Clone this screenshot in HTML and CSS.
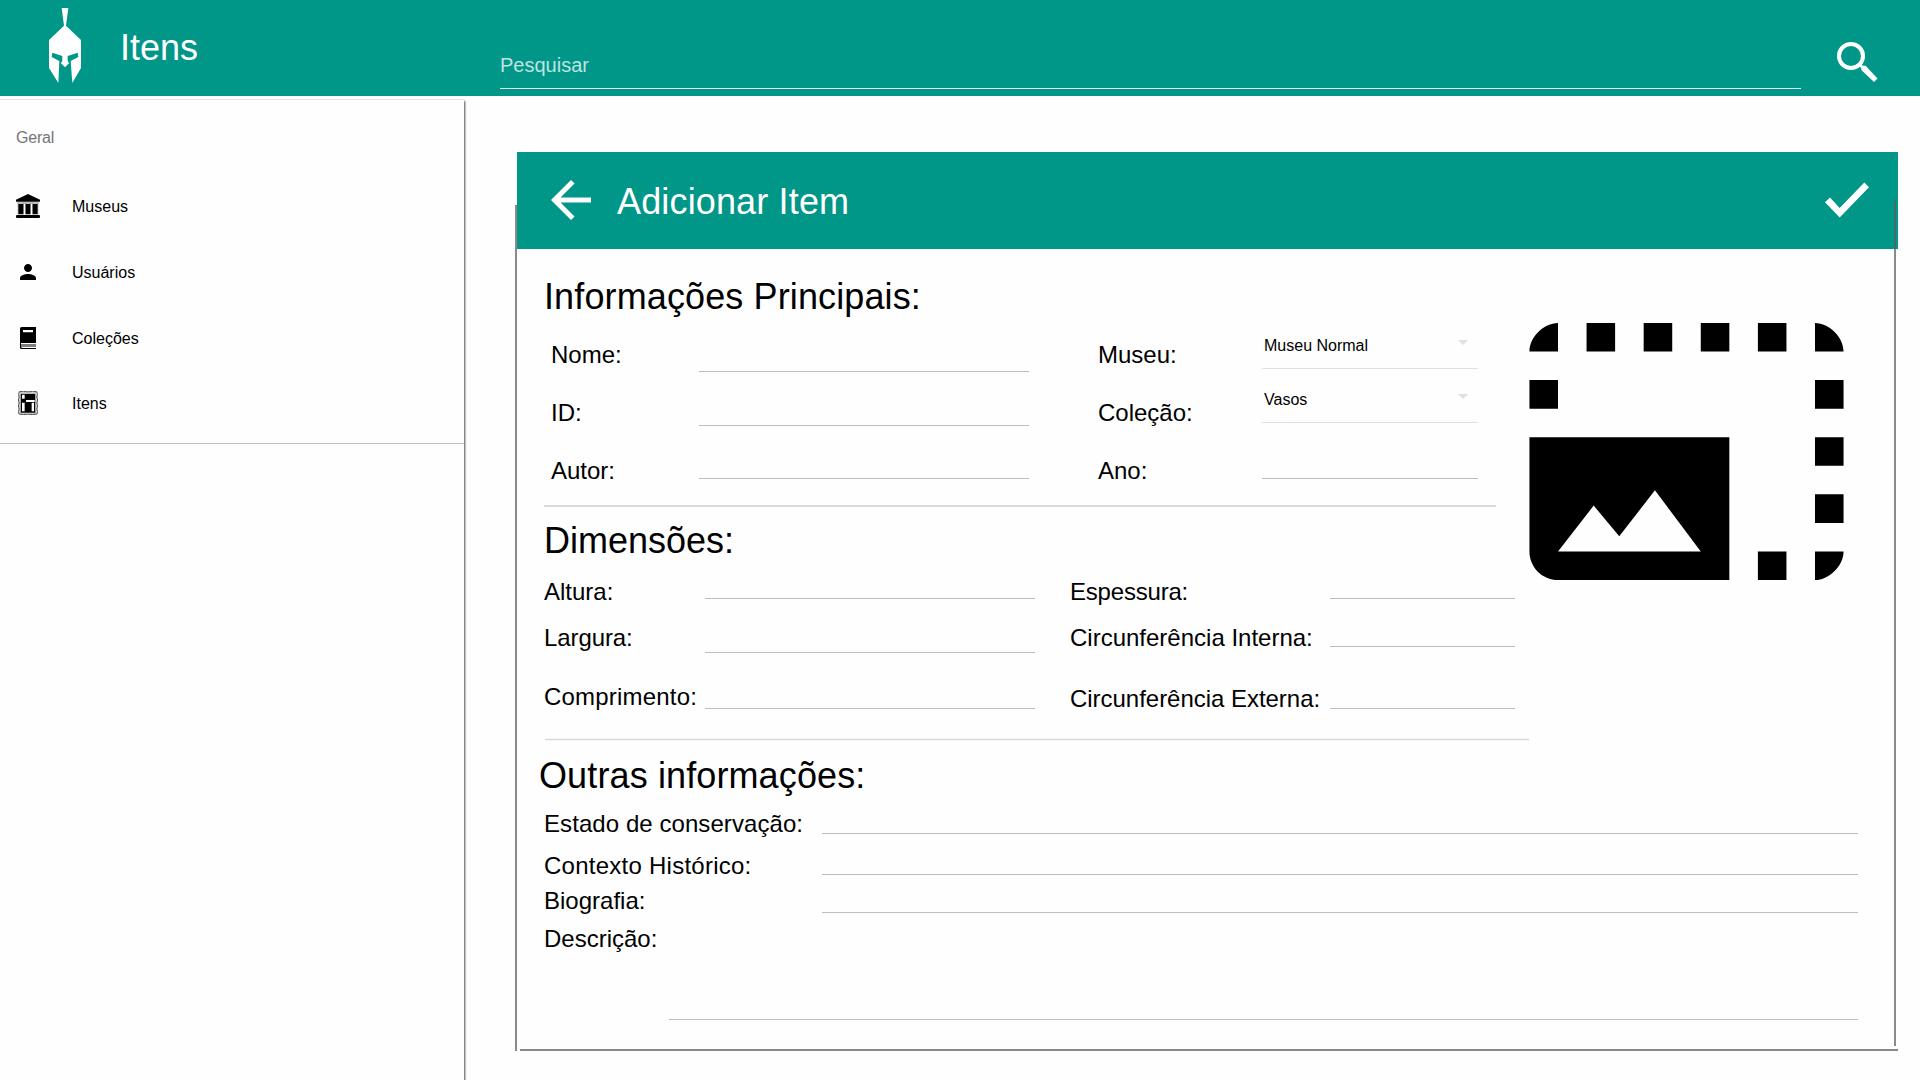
FILE: index.html
```html
<!DOCTYPE html>
<html lang="pt-BR">
<head>
<meta charset="utf-8">
<title>Itens</title>
<link rel="stylesheet" href="styles.css">
</head>
<body>
<header class="topbar">
  <svg class="logo" viewBox="57 24 96 225"><path d="M95 24h20L108 77 153 120V204L127 249 122 183 145 171 143 158 113 168V182L117 190 105 202 93 190 97 182V168L67 158 65 171 88 183 85 249 57 204V120L102 77Z"/></svg>
  <h1 class="topbar-title">Itens</h1>
  <div class="search">Pesquisar</div>
  <svg class="search-icon" viewBox="0 0 41 41"><circle cx="14" cy="14" r="12" fill="none" stroke="#fff" stroke-width="4"/><path d="M24.300 28V26L22 24 24 22 26 23.700H28.700L40.500 36.500 37 40Z"/></svg>
</header>
<div class="layout">
  <nav class="sidebar">
    <div class="sidebar-title">Geral</div>
    <a class="nav-item"><svg class="nav-icon" viewBox="0 0 72 72"><path d="M36 0 72 17V23H0V17Z"/><path d="M4 26H68V28H4ZM7 30H22V61H7ZM29 30H43V61H29ZM50 30H65V61H50Z"/><path d="M5 28h2v33h-2zM22 28h2v33h-2zM27 28h2v33h-2zM43 28h2v33h-2zM48 28h2v33h-2zM65 28h2v33h-2z" opacity=".4"/><rect y="63" width="72" height="9" rx="3"/></svg><span>Museus</span></a>
    <a class="nav-item"><svg class="nav-icon" viewBox="0 0 24 24"><path d="M12 12c2.210 0 4-1.790 4-4s-1.790-4-4-4-4 1.790-4 4 1.790 4 4 4zm0 2c-2.670 0-8 1.340-8 4v2h16v-2c0-2.660-5.330-4-8-4z"/></svg><span>Usuários</span></a>
    <a class="nav-item"><svg class="nav-icon" viewBox="0 0 24 24"><path fill-rule="evenodd" d="M5.500 1H20V17H5V18.500H20V19.500H5V20.500H20V21H5.500V22H20V23H5.500Q4 23 4 21.500V2.500Q4 1 5.500 1ZM7 4V6.300H17V4Z"/></svg><span>Coleções</span></a>
    <a class="nav-item"><svg class="nav-icon" viewBox="0 0 72 72"><path d="M10 2Q22-1 36 3 50-1 62 2 67 10 62 18 68 27 62 36 68 45 62 54 67 62 63 69 50 73 36 69 22 73 9 69 5 62 10 54 4 45 10 36 4 27 10 18 5 10 10 2Z" fill="none" stroke="#333" stroke-width="2.500"/><path d="M12 4Q20 8 36 2 52 8 60 4 58 12 65 18 58 28 65 36 58 46 65 54 58 62 60 67 48 65 36 71 24 65 12 67 14 62 7 54 14 46 7 36 14 28 7 18 14 12 12 4Z" fill="none" stroke="#666" stroke-width="1.200"/><path fill-rule="evenodd" d="M14 8H58V65H14ZM18 11V23H26V11ZM30 27V33H56V27ZM18 35V61H26V35ZM47 35V61H54V35Z"/></svg><span>Itens</span></a>
  </nav>
  <main class="card">
    <header class="card-header">
      <svg class="back" viewBox="4 4 16 16"><path d="M20 11H7.830l5.590-5.590L12 4l-8 8 8 8 1.410-1.410L7.830 13H20v-2z"/></svg>
      <h2 class="card-title">Adicionar Item</h2>
      <svg class="confirm" viewBox="0 0 44 36"><path d="M0 20.300 5 15.600 14.700 26 39.300.500 44 5.200 14.700 35.500Z"/></svg>
    </header>
    <div class="upper">
      <div class="sections">
        <h3 class="heading principal">Informações Principais:</h3>
        <div class="columns main-info">
          <div class="stack">
            <label class="field">Nome:<span class="input nome"></span></label>
            <label class="field">ID:<span class="input id"></span></label>
            <label class="field">Autor:<span class="input autor"></span></label>
          </div>
          <div class="stack right">
            <label class="field">Museu:<span class="select museu">Museu Normal<i class="caret"></i></span></label>
            <label class="field">Coleção:<span class="select colecao">Vasos<i class="caret"></i></span></label>
            <label class="field">Ano:<span class="input autor"></span></label>
          </div>
        </div>
        <div class="divider"></div>
        <h3 class="heading">Dimensões:</h3>
        <div class="columns dimensions">
          <div class="stack">
            <label class="field">Altura:<span class="input altura"></span></label>
            <label class="field largura">Largura:<span class="input"></span></label>
            <label class="field comprimento">Comprimento:<span class="input"></span></label>
          </div>
          <div class="stack right">
            <label class="field espessura">Espessura:<span class="input altura"></span></label>
            <label class="field interna">Circunferência Interna:<span class="input"></span></label>
            <label class="field externa">Circunferência Externa:<span class="input"></span></label>
          </div>
        </div>
        <div class="divider thin"></div>
      </div>
      <svg class="photo" viewBox="1 3 22 18"><path d="M21 15h2v2h-2v-2zm0-4h2v2h-2v-2zm2 8h-2v2c1 0 2-1 2-2zM13 3h2v2h-2V3zm8 4h2v2h-2V7zm0-4v2h2c0-1-1-2-2-2zM1 7h2v2H1V7zm16-4h2v2h-2V3zm0 16h2v2h-2v-2zM3 3C2 3 1 4 1 5h2V3zm6 0h2v2H9V3zM5 3h2v2H5V3zm-4 8v8c0 1.100.900 2 2 2h12V11H1zm2 8l2.500-3.210 1.790 2.150 2.500-3.220L13 19H3z"/></svg>
    </div>
    <section class="other">
      <h3 class="heading">Outras informações:</h3>
      <label class="field estado">Estado de conservação:<span class="input"></span></label>
      <label class="field contexto">Contexto Histórico:<span class="input"></span></label>
      <label class="field biografia">Biografia:<span class="input"></span></label>
      <label class="field descricao">Descrição:<span class="input"></span></label>
    </section>
    <div class="card-bottom"></div>
  </main>
</div>
</body>
</html>
```
FILE: styles.css
```css
* { box-sizing: border-box; }

body {
  margin: 0;
  width: 1920px;
  height: 1080px;
  overflow: hidden;
  background: #fefefe;
  color: #000;
  font-family: "Liberation Sans", Arial, sans-serif;
}

h1, h2, h3 { margin: 0; font-weight: 400; font-size: 36px; line-height: 42px; }
svg { display: block; flex: none; }

.topbar {
  display: flex;
  align-items: flex-start;
  height: 96px;
  padding-left: 49px;
  background: #009688;
  color: #fff;
  fill: #fff;
}
.logo { width: 32px; height: 75px; margin-top: 8px; }
.topbar-title { width: 380px; margin: 27px 0 0 39px; }
.search {
  width: 1301px;
  height: 35px;
  margin-top: 54px;
  border-bottom: 1px solid rgba(255, 255, 255, .87);
  color: rgba(255, 255, 255, .75);
  font-size: 20px;
  line-height: 22px;
}
.search-icon { width: 41px; height: 41px; margin: 42px 0 0 36px; }

.layout { display: flex; align-items: flex-start; }

.sidebar {
  width: 464px;
  height: 990px;
  margin-top: 4px;
  padding-top: 29px;
  background: #fefefe;
  box-shadow: 0 -1px 0 #e2e2e2, 1px 1px 2px rgba(0, 0, 0, .7);
  font-size: 16px;
  line-height: 18px;
}
.sidebar::after {
  content: "";
  display: block;
  height: 1px;
  margin-top: 8px;
  background: #bdbdbd;
}
.sidebar-title { height: 44px; padding-left: 16px; color: #757575; letter-spacing: -.2px; }
.nav-item { display: flex; align-items: center; height: 66px; padding-left: 16px; }
.nav-item:last-of-type { height: 64px; }
.nav-item span { margin-top: 2px; }
.nav-icon { width: 24px; height: 24px; margin-right: 32px; }

.card { position: relative; width: 1383px; margin: 56px 0 0 51px; }
.card::before, .card::after {
  content: "";
  position: absolute;
  width: 2px;
  height: 846px;
  background: rgba(94, 94, 94, .725);
}
.card::before { left: 0; top: 53px; }
.card::after { left: 1379px; top: 48px; }
.card-header {
  display: flex;
  align-items: flex-start;
  height: 97px;
  margin-left: 2px;
  background: #009688;
  color: #fff;
  fill: #fff;
}
.back { width: 40px; height: 40px; margin: 28px 0 0 34px; }
.card-title { margin: 29px 0 0 26px; letter-spacing: .15px; }
.confirm { width: 44px; height: 36px; margin: 30px 29px 0 auto; }
.card-bottom { height: 2px; margin: 29px 0 0 5px; background: #8a8a8a; }

.upper { display: flex; align-items: flex-start; }
.sections { width: 1014px; padding: 27px 0 0 28px; }
.sections .heading { padding-left: 1px; }
.principal { letter-spacing: .12px; }
.photo { width: 315px; height: 257px; margin-top: 74px; }

.columns { display: flex; }
.field {
  display: flex;
  align-items: flex-start;
  justify-content: space-between;
  height: 28px;
  font-size: 24px;
  line-height: 28px;
  white-space: nowrap;
}
.input { flex: none; width: 330px; border-bottom: 1px solid #bdbdbd; }

.main-info { margin: 23px 0 20px 8px; }
.main-info .stack { width: 478px; }
.main-info .right { width: 380px; margin-left: 69px; }
.main-info .field + .field { margin-top: 30px; }
.nome { height: 31px; }
.id { height: 27px; }
.autor { height: 22px; }
.right .input { width: 216px; }
.select {
  display: flex;
  justify-content: space-between;
  width: 216px;
  height: 33px;
  padding: 1px 10px 0 2px;
  border-bottom: 1px solid #e0e0e0;
  font-size: 16px;
  line-height: 18px;
}
.museu { margin-top: -5px; }
.colecao { margin-top: -9px; }
.caret {
  height: 0;
  margin-top: 3px;
  border: 5px solid transparent;
  border-top-color: #e0e0e0;
  border-bottom: 0;
}

.divider { width: 952px; height: 2px; margin: 0 0 13px 1px; background: #d8d8d8; }
.divider.thin {
  width: 984px;
  height: 3px;
  margin: 0 0 0 2px;
  border: solid #f5f5f5;
  border-width: 1px 0;
}

.dimensions { margin: 16px 0 25px 1px; height: 135px; }
.dimensions .stack { width: 491px; }
.dimensions .right { width: 445px; margin-left: 35px; }
.dimensions .right .input { width: 185px; }
.altura { height: 21px; }
.espessura { letter-spacing: -.2px; }
.largura, .interna { margin-top: 18px; }
.largura { letter-spacing: -.1px; }
.largura .input { height: 29px; }
.comprimento { margin-top: 31px; letter-spacing: .2px; }
.comprimento .input { height: 26px; }
.interna .input { height: 23px; }
.externa { margin-top: 33px; letter-spacing: -.03px; }
.externa .input { height: 24px; }

.other { padding: 14px 40px 0 29px; }
.other .heading { margin: 0 0 13px -5px; letter-spacing: .12px; }
.other .input { width: 1036px; }
.estado { letter-spacing: .07px; }
.estado .input { height: 24px; }
.contexto { margin-top: 14px; letter-spacing: .25px; }
.contexto .input { height: 23px; }
.biografia { margin-top: 7px; }
.biografia .input { height: 26px; }
.descricao { height: 95px; margin-top: 10px; }
.descricao .input { width: 1189px; height: 95px; }
```
